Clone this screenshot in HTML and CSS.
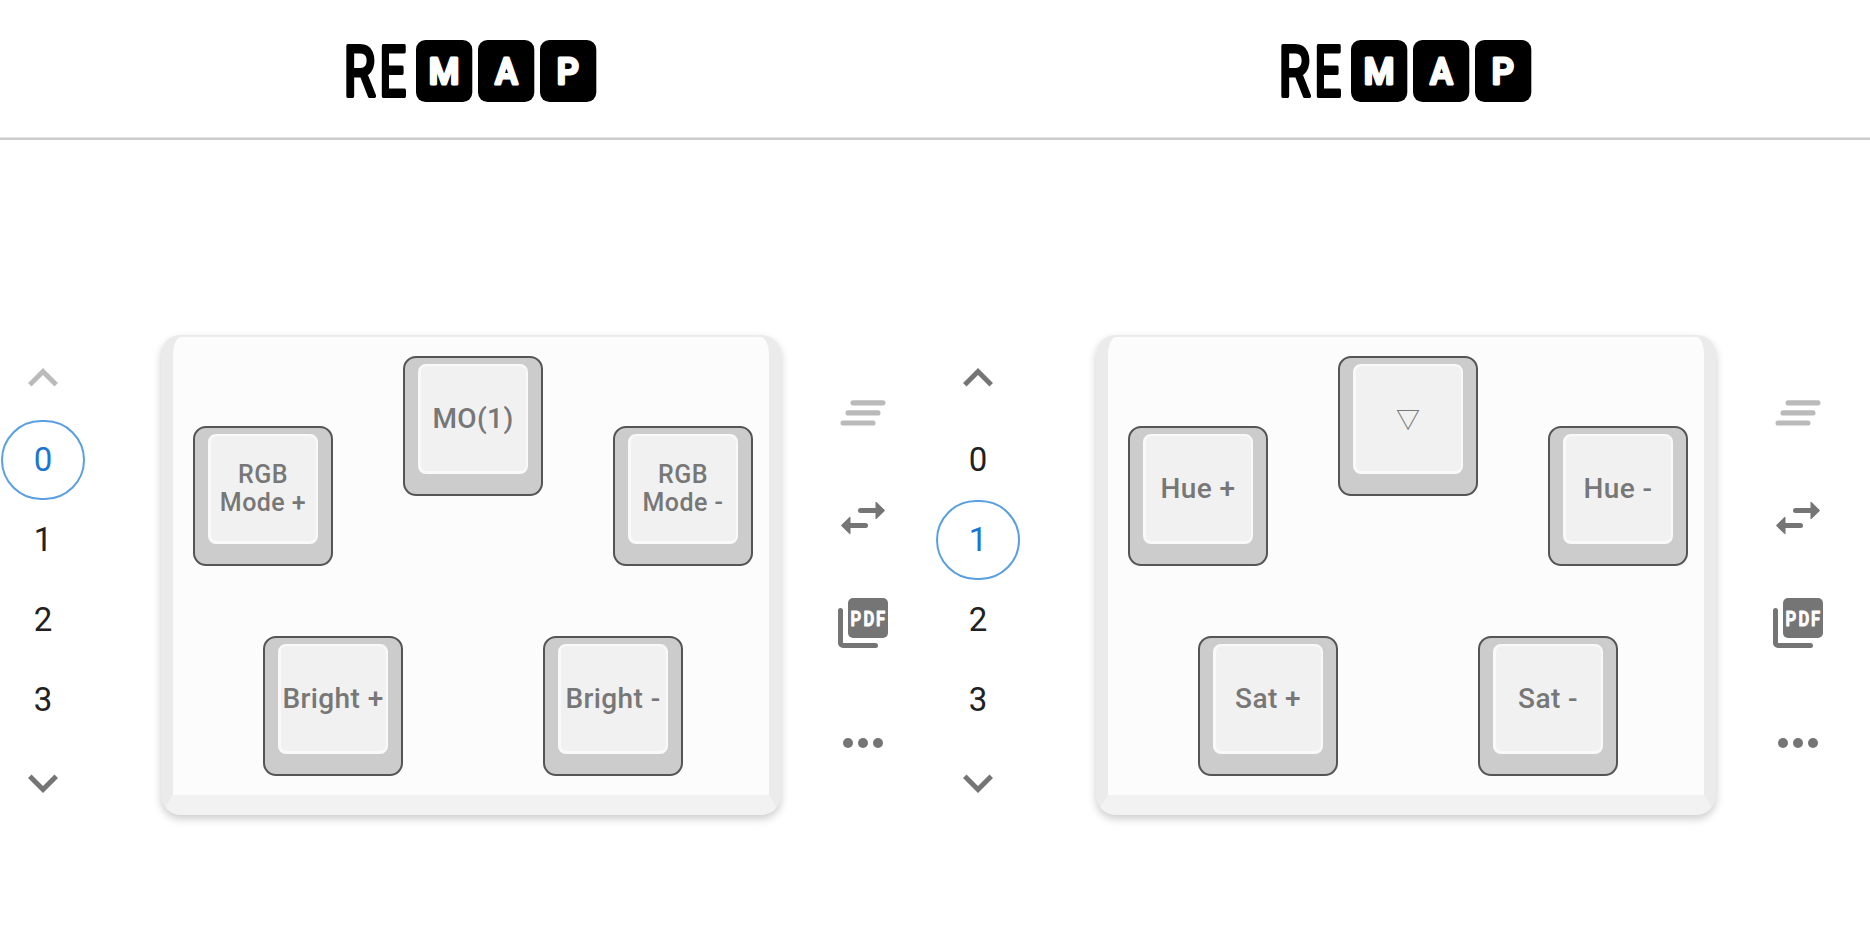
FILE: index.html
```
<!DOCTYPE html>
<html lang="en">
<head>
<meta charset="utf-8">
<title>Remap</title>
<link rel="stylesheet" href="styles.css">
</head>
<body>
<svg class="defs" width="0" height="0" aria-hidden="true">
  <symbol id="up" viewBox="0 0 24 24"><path d="M7.41 15.41 12 10.83l4.59 4.58L18 14l-6-6-6 6z"/></symbol>
  <symbol id="down" viewBox="0 0 24 24"><path d="M7.41 8.59 12 13.17l4.59-4.58L18 10l-6 6-6-6z"/></symbol>
  <symbol id="clear" viewBox="0 0 60 60">
    <rect x="17.5" y="17.2" width="35" height="5.2" rx="2.6"/>
    <rect x="12.5" y="27.3" width="35" height="5.2" rx="2.6"/>
    <rect x="7.5" y="37.4" width="35" height="5.2" rx="2.6"/>
  </symbol>
  <symbol id="swap" viewBox="0 0 60 60">
    <path d="M42.5 20H27.5a2.5 2.5 0 0 0 0 5H42.5v5.2q0 1.6 1.2.5l7.7-7.4q.9-.8 0-1.6l-7.7-7.4q-1.2-1.1-1.2.5z"/>
    <path d="M17.5 35H32.5a2.5 2.5 0 0 1 0 5H17.5v5.2q0 1.6-1.2.5l-7.7-7.4q-.9-.8 0-1.6l7.7-7.4q1.2-1.1 1.2.5z"/>
  </symbol>
  <symbol id="more" viewBox="0 0 60 60"><circle cx="15" cy="30" r="5"/><circle cx="30" cy="30" r="5"/><circle cx="45" cy="30" r="5"/></symbol>
</svg>
<main class="screens">
  <section class="screen">
    <header class="header">
      <svg class="logo" viewBox="0 0 252 64">
        <g class="logo-word">
          <text x="-2.5" y="57.2" textLength="32" lengthAdjust="spacingAndGlyphs">R</text>
          <text x="33.3" y="57.2" textLength="27" lengthAdjust="spacingAndGlyphs">E</text>
        </g>
        <rect x="70" y="1" width="56.3" height="62" rx="9.5"/>
        <rect x="132" y="1" width="56.3" height="62" rx="9.5"/>
        <rect x="194" y="1" width="56.3" height="62" rx="9.5"/>
        <g class="logo-keys">
          <text x="82.7" y="45.4" textLength="30.6" lengthAdjust="spacingAndGlyphs">M</text>
          <text x="149.3" y="45.4" textLength="22.4" lengthAdjust="spacingAndGlyphs">A</text>
          <text x="210.8" y="45.4" textLength="22" lengthAdjust="spacingAndGlyphs">P</text>
        </g>
      </svg>
    </header>
    <div class="workspace">
      <nav class="layers">
        <svg class="icon icon-off"><use href="#up"/></svg>
        <div class="layer-list">
          <div class="layer layer-active">0</div>
          <div class="layer">1</div>
          <div class="layer">2</div>
          <div class="layer">3</div>
        </div>
        <svg class="icon"><use href="#down"/></svg>
      </nav>
      <div class="keyboard">
        <div class="key key-top"><div class="cap">MO(1)</div></div>
        <div class="key key-left"><div class="cap cap-small">RGB<br>Mode +</div></div>
        <div class="key key-right"><div class="cap cap-small">RGB<br>Mode -</div></div>
        <div class="key key-bottom-left"><div class="cap">Bright +</div></div>
        <div class="key key-bottom-right"><div class="cap">Bright -</div></div>
      </div>
      <div class="tools">
        <svg class="icon icon-off"><use href="#clear"/></svg>
        <svg class="icon"><use href="#swap"/></svg>
        <svg class="icon" viewBox="0 0 60 60">
          <rect x="15" y="5" width="40" height="40" rx="5"/>
          <path d="M10 17.5V50H42.5a2.5 2.5 0 0 1 0 5H10a5 5 0 0 1-5-5V17.5a2.5 2.5 0 0 1 5 0z"/>
          <text class="pdf-text" transform="scale(.85 1)" x="20.6 35.8 50.6" y="32.6">PDF</text>
        </svg>
        <svg class="icon icon-more"><use href="#more"/></svg>
      </div>
    </div>
  </section>
  <section class="screen">
    <header class="header">
      <svg class="logo" viewBox="0 0 252 64">
        <g class="logo-word">
          <text x="-2.5" y="57.2" textLength="32" lengthAdjust="spacingAndGlyphs">R</text>
          <text x="33.3" y="57.2" textLength="27" lengthAdjust="spacingAndGlyphs">E</text>
        </g>
        <rect x="70" y="1" width="56.3" height="62" rx="9.5"/>
        <rect x="132" y="1" width="56.3" height="62" rx="9.5"/>
        <rect x="194" y="1" width="56.3" height="62" rx="9.5"/>
        <g class="logo-keys">
          <text x="82.7" y="45.4" textLength="30.6" lengthAdjust="spacingAndGlyphs">M</text>
          <text x="149.3" y="45.4" textLength="22.4" lengthAdjust="spacingAndGlyphs">A</text>
          <text x="210.8" y="45.4" textLength="22" lengthAdjust="spacingAndGlyphs">P</text>
        </g>
      </svg>
    </header>
    <div class="workspace">
      <nav class="layers">
        <svg class="icon"><use href="#up"/></svg>
        <div class="layer-list">
          <div class="layer">0</div>
          <div class="layer layer-active">1</div>
          <div class="layer">2</div>
          <div class="layer">3</div>
        </div>
        <svg class="icon"><use href="#down"/></svg>
      </nav>
      <div class="keyboard">
        <div class="key key-top"><div class="cap cap-symbol">▽</div></div>
        <div class="key key-left"><div class="cap">Hue +</div></div>
        <div class="key key-right"><div class="cap">Hue -</div></div>
        <div class="key key-bottom-left"><div class="cap">Sat +</div></div>
        <div class="key key-bottom-right"><div class="cap">Sat -</div></div>
      </div>
      <div class="tools">
        <svg class="icon icon-off"><use href="#clear"/></svg>
        <svg class="icon"><use href="#swap"/></svg>
        <svg class="icon" viewBox="0 0 60 60">
          <rect x="15" y="5" width="40" height="40" rx="5"/>
          <path d="M10 17.5V50H42.5a2.5 2.5 0 0 1 0 5H10a5 5 0 0 1-5-5V17.5a2.5 2.5 0 0 1 5 0z"/>
          <text class="pdf-text" transform="scale(.85 1)" x="20.6 35.8 50.6" y="32.6">PDF</text>
        </svg>
        <svg class="icon icon-more"><use href="#more"/></svg>
      </div>
    </div>
  </section>
</main>
</body>
</html>
```
FILE: styles.css
```
* { box-sizing: border-box; }
body {
  margin: 0;
  background: #fff;
  font-family: Roboto, "Liberation Sans", sans-serif;
  overflow: hidden;
}
.defs { display: block; }
.screens { display: grid; grid-template-columns: 935px 935px; height: 935px; }
.header {
  height: 140px;
  padding: 39px 0 0 346px;
  border-bottom: 2px solid #ccc;
  box-shadow: inset 0 -1px #e3e3e3;
}
.logo { display: block; width: 252px; height: 64px; fill: #000; overflow: visible; }
.logo-word { font-size: 70px; font-weight: 400; stroke: #000; stroke-width: 4; stroke-linejoin: round; }
.logo-keys { font-size: 36px; font-weight: 500; fill: #fff; stroke: #fff; stroke-width: 3; stroke-linejoin: round; }
.workspace { display: flex; align-items: flex-start; padding-top: 195px; }
.layers {
  width: 84px;
  margin-left: 1px;
  padding-top: 13px;
  display: flex;
  flex-direction: column;
  align-items: center;
}
.layer-list { margin: 12px 0 13px; width: 100%; }
.layer {
  height: 80px;
  display: flex;
  align-items: center;
  justify-content: center;
  font-size: 33px;
  font-weight: 380;
  color: #212121;
  padding-bottom: 2px;
}
.layer-active { border: 2px solid #5a9fe2; border-radius: 42px; color: #1976d2; }
.icon { display: block; flex: none; width: 60px; height: 60px; fill: #757575; }
.icon-off { fill: #bababa; }
.keyboard {
  width: 620px;
  height: 480px;
  margin-left: 76px;
  padding: 19px 16px 19px 20px;
  display: grid;
  grid-template-columns: repeat(8, 70px);
  grid-template-rows: repeat(6, 70px);
  background: #fcfcfc;
  border: solid #ebebeb;
  border-width: 2px 12px 20px;
  border-bottom-color: #f2f2f2;
  border-radius: 20px;
  box-shadow: 0 4px 8px rgba(0, 0, 0, .2);
}
.key {
  padding: 6px 13px;
  background: #ccc;
  border: 2px solid #555;
  border-radius: 13px;
}
.key-top { grid-area: 1 / 4 / span 2 / span 2; }
.key-left { grid-area: 2 / 1 / span 2 / span 2; }
.key-right { grid-area: 2 / 7 / span 2 / span 2; }
.key-bottom-left { grid-area: 5 / 2 / span 2 / span 2; }
.key-bottom-right { grid-area: 5 / 6 / span 2 / span 2; }
.cap {
  height: 110px;
  display: flex;
  align-items: center;
  justify-content: center;
  text-align: center;
  white-space: nowrap;
  border: solid #f9f9f9;
  border-width: 2px 2px 3px 3px;
  border-radius: 8px;
  background: #f1f1f1;
  color: #777;
  font-size: 28px;
  font-weight: 500;
  letter-spacing: .4px;
  padding-right: 1px;
}
.cap-small { font-size: 25px; line-height: 28px; letter-spacing: .45px; padding-top: 1px; }
.cap-symbol { font-family: "Noto Sans CJK JP", sans-serif; font-size: 24px; font-weight: 500; letter-spacing: 0; padding: 0 1px 3px 0; }
.tools { margin-left: 52px; padding-top: 48px; display: flex; flex-direction: column; gap: 45px; }
.icon-more { margin-top: 15px; }
.pdf-text { font-size: 19.5px; font-weight: 600; fill: #fff; stroke: #fff; stroke-width: 1; stroke-linejoin: round; }
```
